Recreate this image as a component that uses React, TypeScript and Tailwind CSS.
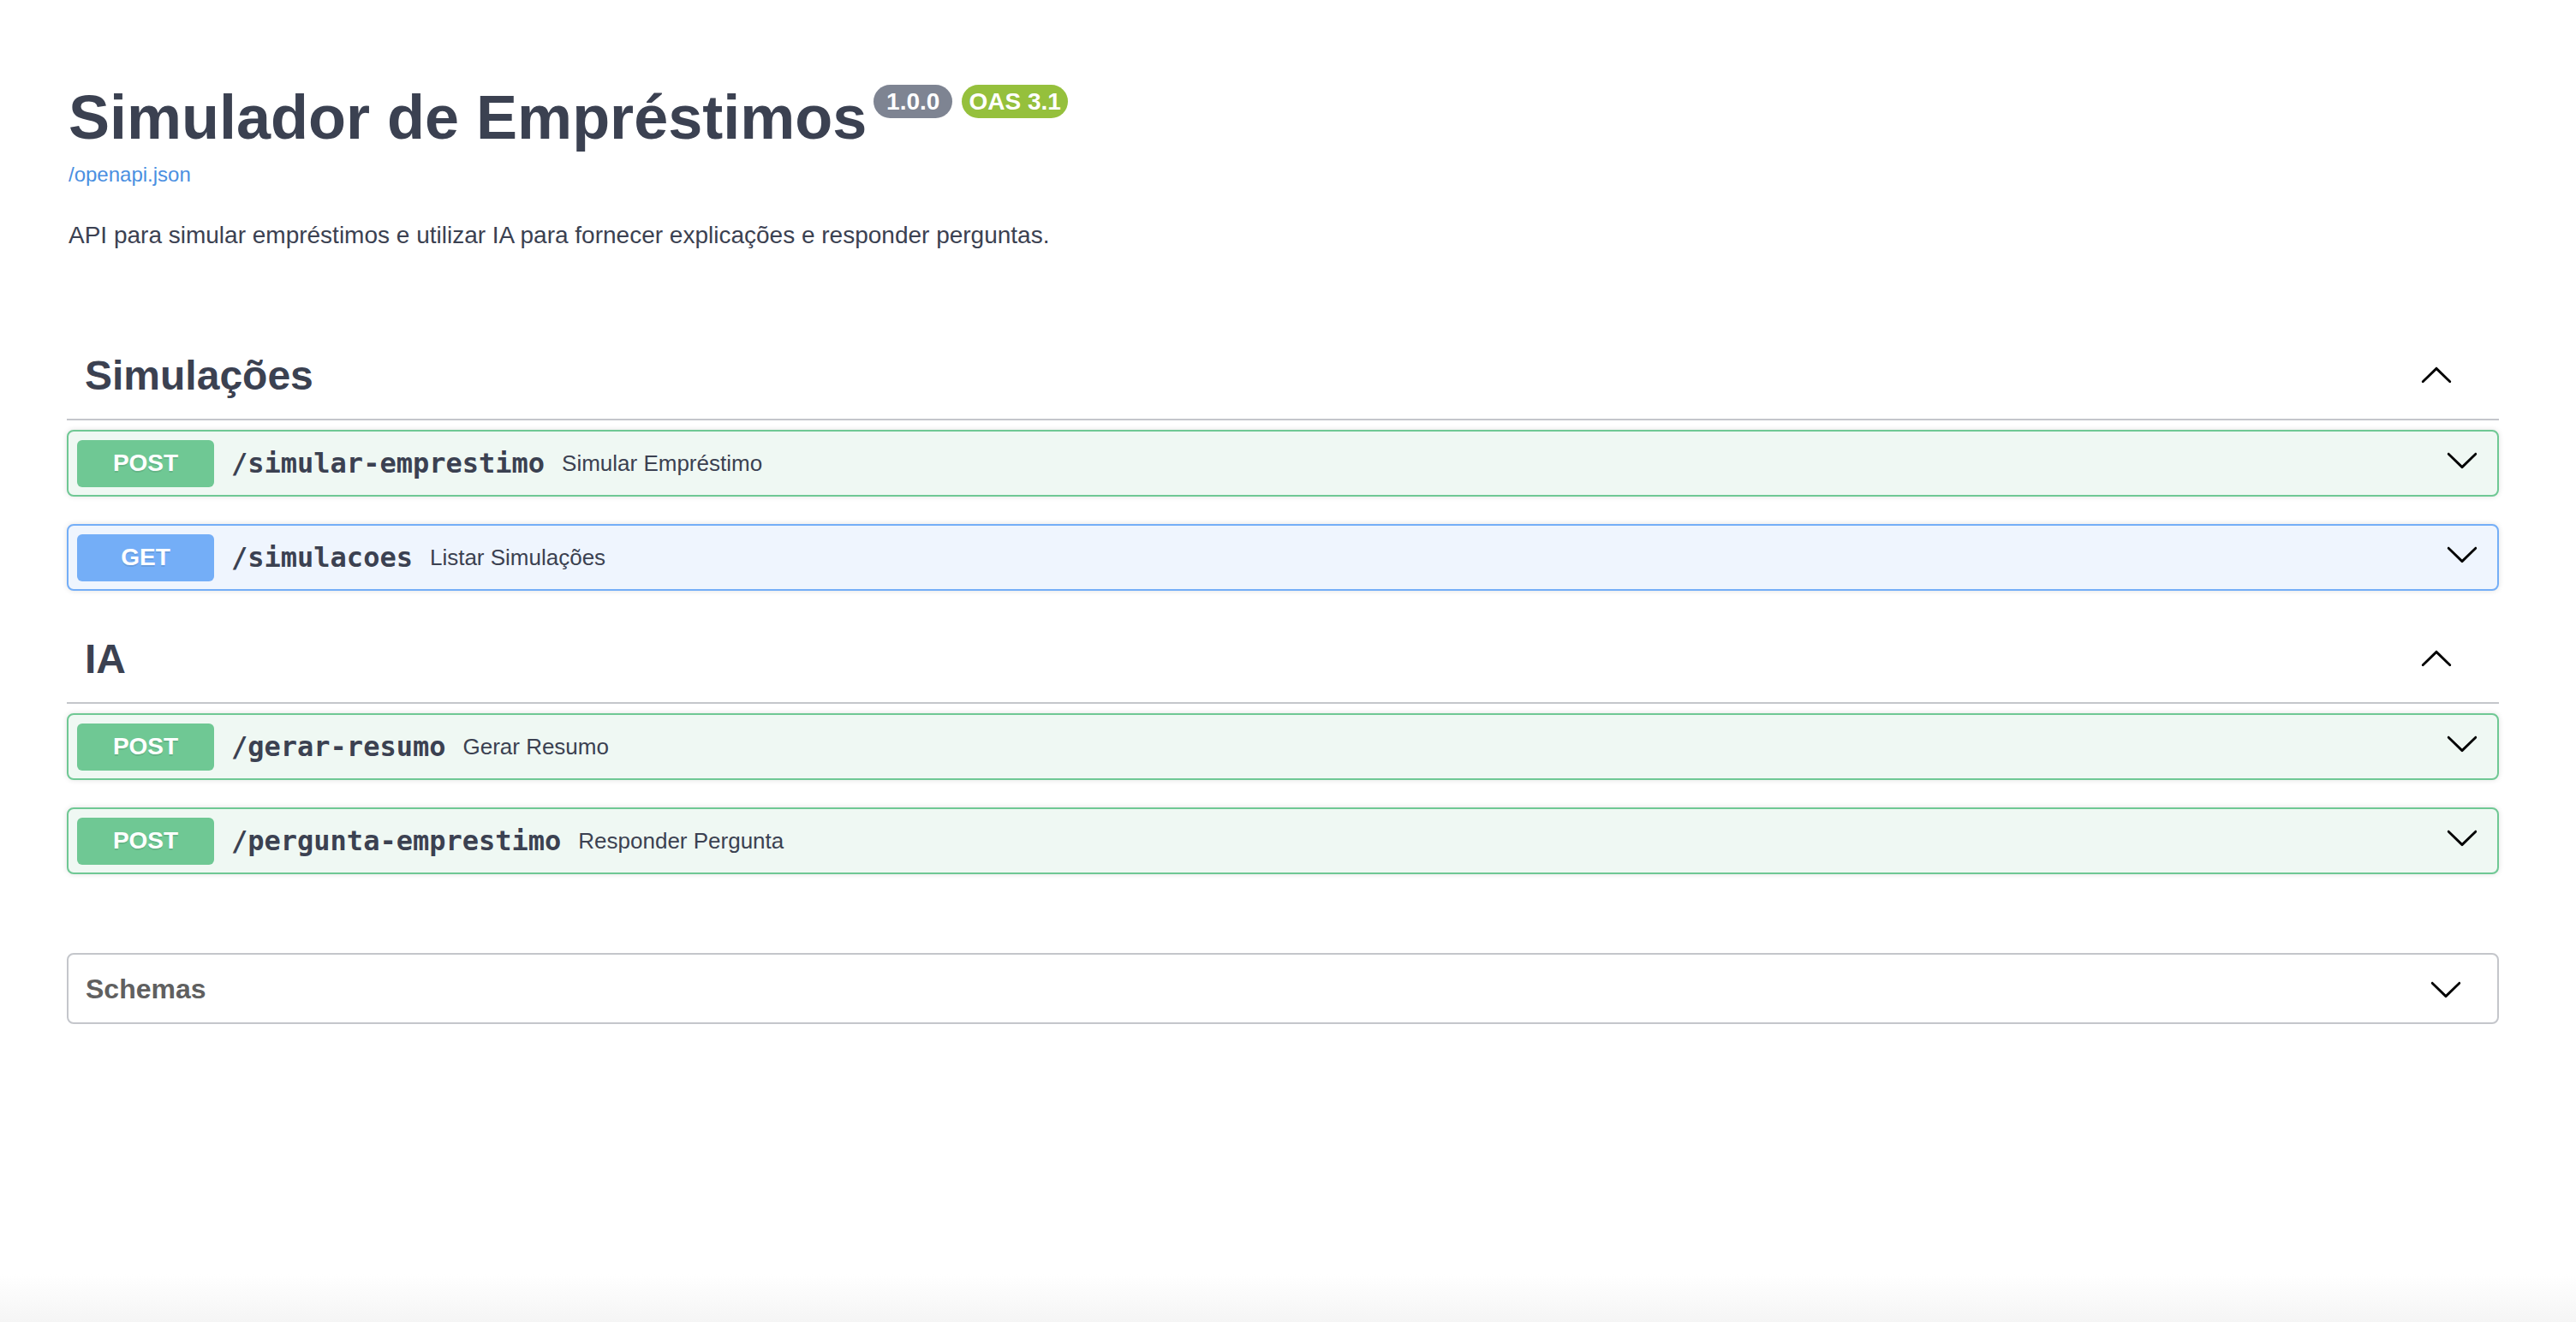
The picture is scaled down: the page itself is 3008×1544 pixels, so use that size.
import React from "react";

type Op = {
  method: "POST" | "GET";
  path: string;
  summary: string;
};

const sections: { name: string; ops: Op[] }[] = [
  {
    name: "Simulações",
    ops: [
      { method: "POST", path: "/simular-emprestimo", summary: "Simular Empréstimo" },
      { method: "GET", path: "/simulacoes", summary: "Listar Simulações" },
    ],
  },
  {
    name: "IA",
    ops: [
      { method: "POST", path: "/gerar-resumo", summary: "Gerar Resumo" },
      { method: "POST", path: "/pergunta-emprestimo", summary: "Responder Pergunta" },
    ],
  },
];

function Arrow({ up = false }: { up?: boolean }) {
  return (
    <svg
      viewBox="0 0 20 20"
      className={`h-[40px] w-[40px] shrink-0 fill-black ${up ? "rotate-180" : ""}`}
    >
      <path d="M17.418 6.109c.272-.268.709-.268.979 0s.271.701 0 .969l-7.908 7.83c-.27.268-.707.268-.979 0l-7.908-7.83c-.27-.268-.27-.701 0-.969.271-.268.709-.268.979 0L10 13.25l7.418-7.141z" />
    </svg>
  );
}

function OpBlock({ op }: { op: Op }) {
  const isPost = op.method === "POST";
  return (
    <div
      className={`flex h-[78px] items-center rounded-[8px] border-2 px-[10px] shadow-[0_0_6px_rgba(0,0,0,0.12)] ${
        isPost ? "border-[#6fc894] bg-[#eff8f3]" : "border-[#74aef7] bg-[#eff5fe]"
      }`}
    >
      <span
        className={`flex h-[55px] w-[160px] shrink-0 items-center justify-center rounded-[6px] text-[28px] leading-none font-bold text-white [text-shadow:0_2px_0_rgba(0,0,0,0.1)] ${
          isPost ? "bg-[#6fc894]" : "bg-[#74aef7]"
        }`}
      >
        {op.method}
      </span>
      <span className="ml-[20px] font-['DejaVu_Sans_Mono','Liberation_Mono',monospace] text-[32px] leading-[40px] font-bold text-[#3b4151]">
        {op.path}
      </span>
      <span className="ml-[20px] text-[26px] leading-[32px] text-[#3b4151]">{op.summary}</span>
      <div className="mr-[11px] mb-[8px] ml-auto">
        <Arrow />
      </div>
    </div>
  );
}

export default function App() {
  return (
    <div className="flex min-h-screen flex-col bg-white font-['Liberation_Sans',Arial,sans-serif] text-[#3b4151]">
      <div className="pt-[101px] pr-[90px] pl-[78px]">
        <div className="ml-[2px]">
          <div className="flex items-start">
            <h2 className="text-[72px] leading-[72px] font-bold">Simulador de Empréstimos</h2>
            <div className="mt-[-2px] ml-[8px] flex gap-[11px]">
              <span className="flex h-[39px] w-[92px] items-center justify-center rounded-full bg-[#7e8492] text-[28px] leading-none font-bold text-white">
                1.0.0
              </span>
              <span className="flex h-[39px] w-[124px] items-center justify-center rounded-full bg-[#95c03c] text-[28px] leading-none font-bold text-white">
                OAS 3.1
              </span>
            </div>
          </div>
          <a className="mt-[19px] block text-[24px] leading-[24px] text-[#4a8fe1]" href="#">
            /openapi.json
          </a>
          <p className="mt-[45px] text-[28px] leading-[28px]">
            API para simular empréstimos e utilizar IA para fornecer explicações e responder perguntas.
          </p>
        </div>

        {sections.map((s, i) => (
          <section key={s.name} className={i === 0 ? "mt-[106px]" : "mt-[36px]"}>
            <div className="flex items-center justify-between border-b-2 border-[#c4c6cb] pt-[20px] pr-[53px] pb-[26px] pl-[21px]">
              <h3 className="text-[48px] leading-[48px] font-bold">{s.name}</h3>
              <Arrow up />
            </div>
            <div className="mt-[11px] flex flex-col gap-[32px]">
              {s.ops.map((op) => (
                <OpBlock key={op.path} op={op} />
              ))}
            </div>
          </section>
        ))}

        <div className="mt-[92px] flex h-[83px] items-center justify-between rounded-[8px] border-2 border-[#c4c6cb] pr-[40px] pl-[20px]">
          <h4 className="text-[32px] leading-[32px] font-bold text-[#606060]">Schemas</h4>
          <Arrow />
        </div>
      </div>
      <div className="flex-1" />
      <div className="h-[56px] bg-linear-to-b from-white to-[#f5f5f5]" />
    </div>
  );
}
